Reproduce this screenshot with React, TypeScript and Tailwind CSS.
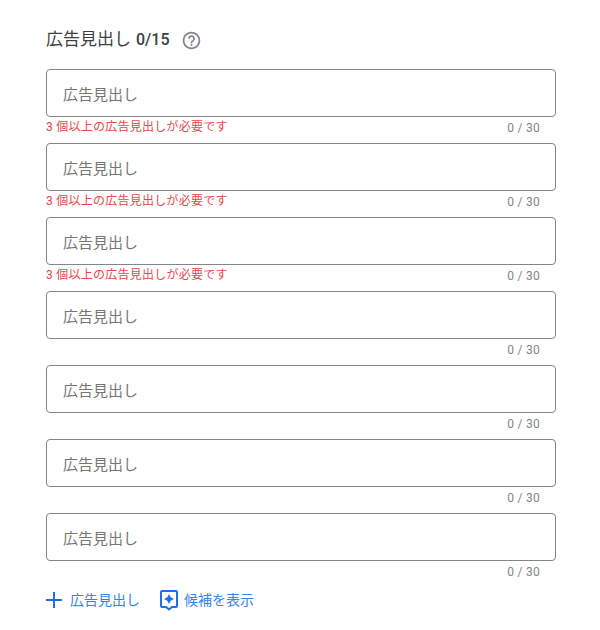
const font = "font-['Roboto','Noto_Sans_CJK_JP',sans-serif]";

function HelpIcon() {
  return (
    <svg width="21" height="21" viewBox="0 0 24 24" fill="#80868b">
      <path d="M11 18h2v-2h-2v2zm1-16C6.48 2 2 6.48 2 12s4.48 10 10 10 10-4.48 10-10S17.52 2 12 2zm0 18c-4.41 0-8-3.59-8-8s3.59-8 8-8 8 3.59 8 8-3.59 8-8 8zm0-14c-2.21 0-4 1.79-4 4h2c0-1.1.9-2 2-2s2 .9 2 2c0 2-3 1.75-3 5h2c0-2.25 3-2.5 3-5 0-2.21-1.79-4-4-4z" />
    </svg>
  );
}

function SuggestIcon() {
  return (
    <svg width="20" height="22" viewBox="0 0 20 22" fill="none">
      <path
        d="M3 2h14a1 1 0 0 1 1 1v14a1 1 0 0 1-1 1h-4l-3 2.500L7 18H3a1 1 0 0 1-1-1V3a1 1 0 0 1 1-1z"
        stroke="#1a73e8"
        strokeWidth="2"
      />
      <path d="M10 5l1.700 3.300 3.300 1.700-3.300 1.700-1.700 3.300-1.700-3.300L5 10l3.300-1.700z" fill="#1a73e8" />
    </svg>
  );
}

function HeadlineField({ error }: { error?: boolean }) {
  return (
    <div>
      <div className="flex h-12 items-center rounded border border-[#80868b] bg-white pt-[5px] pl-4 text-[15px] text-[#757575]">
        広告見出し
      </div>
      <div className="flex h-[26px] justify-between">
        <div className="pt-[1px] text-xs leading-[18px] tracking-[0.25px] text-[#e5484d]">
          {error ? "3 個以上の広告見出しが必要です" : ""}
        </div>
        <div className="pt-[2px] pr-[16px] text-xs leading-[18px] tracking-[0.25px] text-[#80868b]">0 / 30</div>
      </div>
    </div>
  );
}

export default function App() {
  return (
    <div className={`${font} h-[630px] w-[600px] bg-white pt-[28px] pr-[44px] pl-[46px]`}>
      <div className="mb-[17px] flex h-6 items-center text-[#3c4043]">
        <span className="text-[17px]">広告見出し</span>
        <span className="ml-[5px] text-base font-medium">0/15</span>
        <span className="ml-[11px] flex">
          <HelpIcon />
        </span>
      </div>
      {[true, true, true, false, false, false, false].map((error, i) => (
        <HeadlineField key={i} error={error} />
      ))}
      <div className="mt-[2px] flex items-center text-sm text-[#3b82e8]">
        <svg width="16" height="16" viewBox="0 0 16 16" fill="#1a73e8">
          <path d="M7 0h2v7h7v2H9v7H7V9H0V7h7z" />
        </svg>
        <span className="ml-2">広告見出し</span>
        <span className="ml-[19px] flex">
          <SuggestIcon />
        </span>
        <span className="ml-[5px]">候補を表示</span>
      </div>
    </div>
  );
}
